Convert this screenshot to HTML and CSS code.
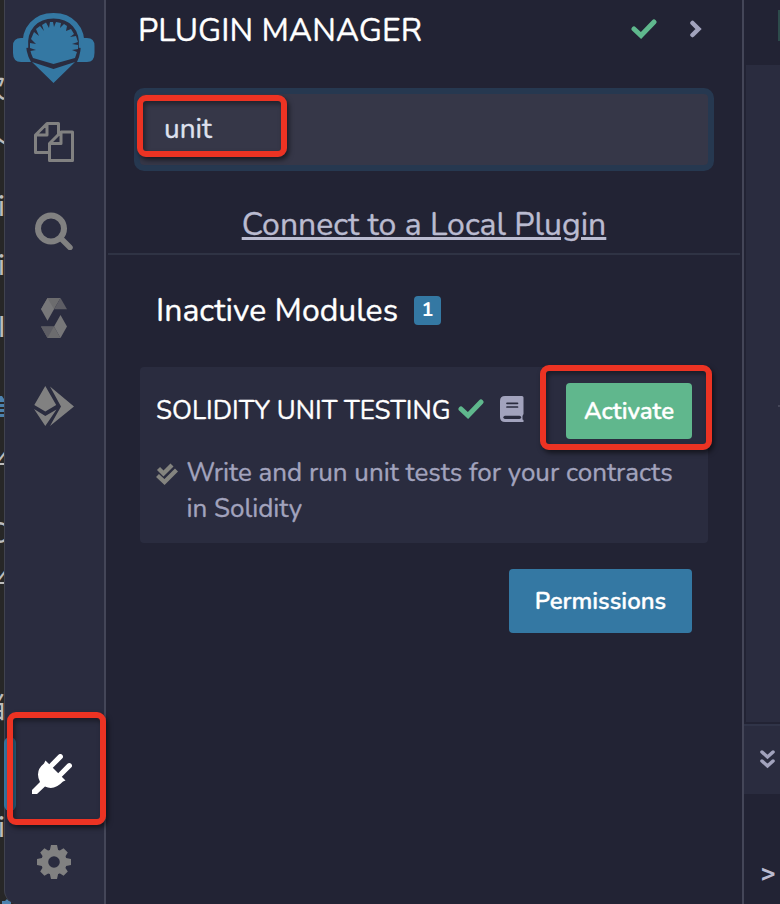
FILE: index.html
```html
<!DOCTYPE html>
<html lang="en">
<head>
<meta charset="utf-8">
<title>Plugin Manager</title>
<link rel="stylesheet" href="styles.css">
</head>
<body>
<div class="app">
  <svg class="backdrop" width="20" height="904" viewBox="0 0 20 904" aria-hidden="true">
    <g fill="#bcbcbc" font-family="Lato, 'Noto Sans CJK SC', sans-serif" font-size="29" text-anchor="end">
      <text x="6" y="98">次</text><text x="9" y="157">个</text>
      <text x="5" y="216">i</text><text x="5" y="275">i</text><text x="5" y="337">l</text>
      <text x="12" y="471">4</text><text x="7" y="543">C</text><text x="12" y="590">4</text>
      <text x="7" y="718">当</text><text x="5" y="837">i</text>
    </g>
    <g fill="#4d82ae"><path d="M0 396h2l2 3v3H0zM0 404h5v3H0zM0 409h5v3H0zM0 414h5v3H0zM2 901h3l2-2 2 2h2v3H2z"/></g>
  </svg>
  <nav class="rail">
    <a class="logo"><svg width="82" height="70" viewBox="13 13 82 70"><path fill="none" stroke="#3478a3" stroke-width="5.500" d="M25.500 48C23.500 28 36 15.800 53.500 15.800S83.500 28 81.500 48"/><path fill="#3478a3" d="M27 38H21Q13 38 13 46V53Q13 62 21 62H31Q25 52 26 38ZM80.500 38H87Q94.500 38 94.500 46V53Q94.500 62 87 62H77Q82 52 80.500 38ZM32 62L53.500 69L75 62L53.500 83Z"/><path fill="#3478a3" d="M53.500 64L33 58Q31 54 30.500 51L36 50L30 48V43L36 44L31 39L34 32L39 36L36 29L40 26L44 31L42 25L46 22.500L49 28L50 22H53L54 27L56 22L61 23L60 28L64 24L67 26L66 31L71 29L74 34L70 37L76 36L78 42L72 44L78 45V49L72 50L77 52L75 58Z"/></svg></a>
    <a class="files"><svg width="42" height="42" viewBox="33 121 42 42" fill="none" stroke="#818181" stroke-width="3" stroke-linejoin="round"><path d="M49 152.500H35.500V135L47 123.500H58.500V134M47 123.500V135H35.500M49.500 160.500V143.500L61 132H72.500V160.500ZM61 132V143.500H49.500"/></svg></a>
    <a class="search"><svg width="38" height="38" viewBox="35 212 38 38" fill="none" stroke="#818181"><circle cx="51" cy="228.500" r="13" stroke-width="6"/><path d="M61 238.500L70 247.500" stroke-width="5.500" stroke-linecap="round"/></svg></a>
    <a class="solidity"><svg width="26" height="40" viewBox="41 298 26 40"><path fill="#6c6c6e" d="M47.500 298H60.500L54 309.300H41Z"/><path fill="#5d5d64" d="M60.500 298L67 309.300H54Z"/><path fill="#777779" d="M41 309.300L47.500 298L54 309.300L47.500 320.700Z"/><path fill="#6c6c6e" d="M41 326.500H54L60.500 338H47.500Z"/><path fill="#5d5d64" d="M41 326.500H54L47.500 338Z"/><path fill="#777779" d="M60.500 315L67 326.500L60.500 338L54 326.500Z"/></svg></a>
    <a class="deploy"><svg width="40" height="40" viewBox="34 386 40 40" fill="#818181"><path d="M45.300 386L56.200 405L45.300 411.500L34.300 405ZM34 409L45.300 416L56.500 409.500L45.300 426ZM50 386.500L74 406.500L50 426L61 406.500Z"/></svg></a>
    <a class="plug"><svg width="40" height="40" viewBox="32 754 40 40"><path fill="none" stroke="#fff" stroke-width="5.200" stroke-linecap="round" d="M51 766L60.300 756.700M60 775L69.300 765.700"/><path fill="#fff" d="M45.500 760.500L65.500 780.500L63 781.500Q54 791 45 786.500L37 794H32V790L40 782Q34.500 771 44 763.500Z"/></svg></a>
    <a class="gear"><svg width="34" height="34" viewBox="37 845 34 34"><g fill="#818181"><path d="M51 845H57L59 854H49ZM51 879H57L59 870H49ZM37 859L47 857V867L37 865ZM71 859L61 857V867L71 865Z"/><path transform="rotate(45 54 862)" d="M51 845.500H57L59 854H49ZM51 878.500H57L59 870H49ZM37.500 859L47 857V867L37.500 865ZM70.500 859L61 857V867L70.500 865Z"/></g><circle cx="54" cy="862" r="9.300" fill="none" stroke="#818181" stroke-width="7"/></svg></a>
    <i class="active-bar"></i>
  </nav>
  <main class="panel">
    <header><h1>PLUGIN MANAGER</h1>
      <svg class="check" width="26" height="20" viewBox="0 0 26 20"><path d="M3 10L10 16.500L23 3"/></svg>
      <svg class="chevron" width="12" height="18" viewBox="0 0 12 18"><path d="M2.500 3L8.500 9L2.500 15"/></svg>
    </header>
    <div class="field"><span>unit</span></div>
    <div class="connect"><a>Connect to a Local Plugin</a></div>
    <section>
      <div class="heading"><h2>Inactive Modules</h2><b class="badge">1</b></div>
      <article class="card">
        <div class="title"><h3>SOLIDITY UNIT TESTING</h3>
          <svg class="check" width="26" height="20" viewBox="0 0 26 20"><path d="M3 10L10 16.500L23 3"/></svg>
          <svg class="book" width="24" height="26" viewBox="0 0 24 26"><path fill="#a2a3bd" d="M5 0H22Q23.500 0 23.500 1.500V18L22.500 20V23.500L23.500 24V26H5Q0 26 0 21V5Q0 0 5 0Z"/><path stroke="#2a2c3f" stroke-width="1.700" stroke-linecap="round" d="M7 7.300H17.500M7 11H17.500"/><path stroke="#2a2c3f" stroke-width="3.200" stroke-linecap="round" d="M5 21.300H19.500"/></svg>
          <button class="activate"><span>Activate</span></button>
        </div>
        <div class="desc"><svg width="22" height="22" viewBox="0 0 22 22" fill="none" stroke="#84847f" stroke-width="4.300"><path d="M2.500 5.500L7.500 10.500L16 2M1.500 12.500L8.500 19L20.500 7"/></svg><p>Write and run unit tests for your contracts<br><span>in Solidity</span></p></div>
      </article>
      <div class="actions"><button class="permissions"><span>Permissions</span></button></div>
    </section>
  </main>
  <aside class="editor">
    <div class="tabs"><i></i></div>
    <div class="code"><i></i></div>
    <div class="terminal-bar"><svg width="16" height="20" viewBox="0 0 16 20" fill="none" stroke="#a2a3bd" stroke-width="3.500" stroke-linecap="round"><path d="M2 3L7.500 8L13 3M2 12L7.500 17L13 12"/></svg></div>
    <div class="prompt">&gt;</div>
  </aside>
  <i class="mark mark-input"></i><i class="mark mark-activate"></i><i class="mark mark-plug"></i>
</div>
</body>
</html>
```
FILE: styles.css
```css
* { box-sizing: border-box; }
body { margin: 0; background: #272727; font-family: Nunito, Lato, sans-serif; }
h1, h2, h3, p { margin: 0; font-weight: 400; }
svg { display: block; flex: none; }
button { border: 0; padding: 0; font: 600 24px Nunito, Lato, sans-serif; color: #fff; border-radius: 4px; }
h1, h2, h3, p, .field, .connect, button { -webkit-text-stroke: .35px currentColor; }
.app { position: relative; width: 780px; height: 904px; overflow: hidden; display: flex; }
.backdrop { position: absolute; left: 0; top: 0; }
.rail { position: relative; z-index: 1; margin-left: 4px; width: 102px; height: 904px; background: #2a2c3f; border-left: 1px solid #41434f; border-right: 2px solid #444658; border-bottom-left-radius: 14px; display: flex; flex-direction: column; }
.logo { margin: 13px 0 0 8px; }
.files { margin: 38px 0 0 28px; }
.search { margin: 49px 0 0 30px; }
.solidity { margin: 48px 0 0 36px; }
.deploy { margin: 48px 0 0 29px; }
.plug { margin: 328px 0 0 27px; }
.gear { margin: 51px 0 0 32px; }
.active-bar { position: absolute; left: -1px; top: 737px; width: 12px; height: 74px; background: linear-gradient(90deg, #3478a3 4px, #286280 4px); border-radius: 7px; }
.panel { width: 638px; background: #222334; border-right: 2px solid #444658; }
header { height: 88px; padding: 9px 0 0 32px; display: flex; align-items: flex-start; }
h1, h2 { color: #fff; font-size: 32px; line-height: 40px; white-space: nowrap; }
h1 { width: 493px; margin-top: 2px; }
.check { fill: none; stroke: #5fb88d; stroke-width: 5; stroke-linecap: round; }
header .check { margin-top: 10px; }
.chevron { margin: 11px 0 0 33px; fill: none; stroke: #a2a3bd; stroke-width: 4.5; stroke-linecap: round; }
.field { margin-left: 28px; width: 580px; height: 83px; padding: 20px 24px; border: 6px solid #263850; border-radius: 10px; background: #363748; color: #dfe1ee; font-size: 28px; line-height: 30px; }
.connect { margin: 0 2px; height: 84px; border-bottom: 2px solid #2f3344; padding-top: 34px; text-align: center; font-size: 32px; line-height: 40px; color: #babbd0; }
.connect a { text-decoration: underline; text-decoration-thickness: 2.5px; text-underline-offset: 2px; }
section { padding: 0 34px; }
.heading { height: 112px; padding: 36px 0 0 16px; display: flex; }
.badge { margin: 5px 0 0 16px; width: 27px; height: 29px; border-radius: 4px; background: #3478a3; color: #fff; text-align: center; font: 700 20px/28px Nunito, Lato, sans-serif; }
.card { width: 568px; height: 176px; padding: 16px; background: #2a2c3f; border-radius: 4px; }
.title { display: flex; align-items: flex-start; height: 72px; }
h3 { color: #fff; font-size: 26px; line-height: 32px; padding-top: 12px; width: 302px; white-space: nowrap; }
.title .check { margin-top: 16px; }
.book { margin: 13px 0 0 16px; }
.activate { margin-left: auto; width: 126px; height: 56px; background: #60b78d; }
.desc { display: flex; color: #a2a3bd; font-size: 26px; line-height: 36px; white-space: nowrap; }
.desc svg { margin: 8px 8.5px 0 0; }
.actions { padding: 26px 16px; display: flex; justify-content: flex-end; }
.permissions { width: 183px; height: 64px; background: #3478a3; }
.editor { width: 36px; background: #222334; }
.tabs { height: 65px; padding-top: 10px; }
.tabs i { display: block; margin-left: 34px; width: 2px; height: 31px; background: #2d4b4b; }
.code { height: 657px; margin-left: 2px; padding-top: 340px; background: #2a2c3f; }
.code i { display: block; height: 2px; width: 2px; margin-left: auto; background: #444658; }
.terminal-bar { margin-top: 2px; height: 70px; border-top: 2px solid #303448; padding: 23px 0 0 16px; background: #2a2c3f; }
.prompt { padding: 65px 0 0 17px; color: #babbd0; font: 700 24px/30px "DejaVu Sans Mono", monospace; }
.mark { position: absolute; z-index: 2; border: 6px solid #ec3323; border-radius: 9px; box-shadow: 2px 3px 5px #0008, inset 2px 3px 5px #0006; }
.mark-input { left: 137px; top: 95px; width: 150px; height: 62px; }
.mark-activate { left: 540px; top: 365px; width: 172px; height: 85px; }
.mark-plug { left: 7px; top: 712px; width: 99px; height: 113px; }
```
